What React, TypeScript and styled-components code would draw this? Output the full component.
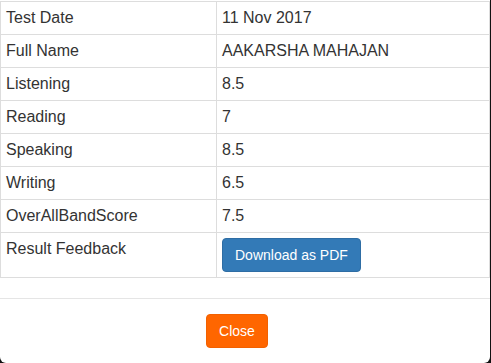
import React from "react";
import styled, { createGlobalStyle } from "styled-components";

const GlobalStyle = createGlobalStyle`
  html, body {
    margin: 0;
    padding: 0;
    background: #111;
  }
  body {
    font-family: "Liberation Sans", Arial, sans-serif;
  }
`;

const Modal = styled.div`
  width: 490px;
  background: #fff;
  padding-top: 1px;
  border-radius: 0 0 6px 6px;
  overflow: hidden;
`;

const Table = styled.table`
  width: 490px;
  table-layout: fixed;
  border-collapse: collapse;
  margin: 0 0 20px 0;
  font-family: "Liberation Sans", Arial, sans-serif;
  font-size: 16px;
  line-height: 22px;
  color: #333;
`;

const Cell = styled.td<{ $label?: boolean }>`
  border: 1px solid #ddd;
  padding: 5px;
  vertical-align: top;
  text-align: left;
  width: ${(p) => (p.$label ? "205px" : "auto")};
  white-space: nowrap;
`;

const Button = styled.button<{ $variant: "primary" | "orange" }>`
  display: inline-block;
  vertical-align: top;
  font-family: "Liberation Sans", Arial, sans-serif;
  font-size: 14px;
  line-height: 20px;
  padding: 6px 12px;
  border-radius: 4px;
  color: #fff;
  cursor: pointer;
  background: ${(p) => (p.$variant === "primary" ? "#337ab7" : "#ff6600")};
  border: 1px solid ${(p) => (p.$variant === "primary" ? "#2e6da4" : "#f26100")};
`;

const Footer = styled.div`
  border-top: 1px solid #e5e5e5;
  padding: 15px 16px 15px 0;
  display: flex;
  justify-content: center;
`;

const rows: [string, string][] = [
  ["Test Date", "11 Nov 2017"],
  ["Full Name", "AAKARSHA MAHAJAN"],
  ["Listening", "8.5"],
  ["Reading", "7"],
  ["Speaking", "8.5"],
  ["Writing", "6.5"],
  ["OverAllBandScore", "7.5"],
];

export default function App() {
  return (
    <>
      <GlobalStyle />
      <Modal>
        <Table>
          <tbody>
            {rows.map(([k, v]) => (
              <tr key={k}>
                <Cell $label>{k}</Cell>
                <Cell>{v}</Cell>
              </tr>
            ))}
            <tr>
              <Cell $label>Result Feedback</Cell>
              <Cell>
                <Button $variant="primary">Download as PDF</Button>
              </Cell>
            </tr>
          </tbody>
        </Table>
        <Footer>
          <Button $variant="orange">Close</Button>
        </Footer>
      </Modal>
    </>
  );
}
